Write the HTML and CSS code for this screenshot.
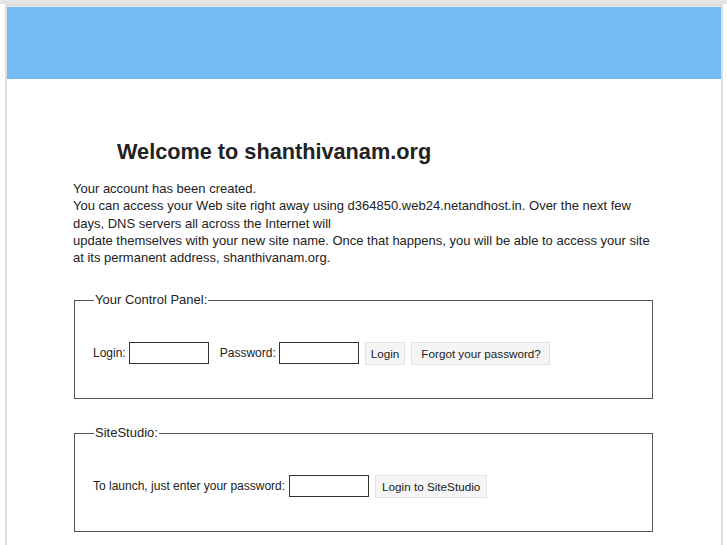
FILE: index.html
```html
<!DOCTYPE html>
<html>
<head>
<meta charset="utf-8">
<title>Welcome to shanthivanam.org</title>
<link rel="stylesheet" href="styles.css">
</head>
<body>
<div class="frame">
  <div class="banner"></div>
  <div class="content">
    <h1 class="title">Welcome to shanthivanam.org</h1>
    <p class="intro">Your account has been created.<br>
    You can access your Web site right away using d364850.web24.netandhost.in. Over the next few days, DNS servers all across the Internet will<br>
    update themselves with your new site name. Once that happens, you will be able to access your site at its permanent address, shanthivanam.org.</p>

    <fieldset class="box">
      <legend class="box-legend">Your Control Panel:</legend>
      <div class="row">
        <label class="lbl">Login:</label>
        <input class="field" type="text">
        <label class="lbl lbl-gap">Password:</label>
        <input class="field field-pw" type="password">
        <button class="btn btn-narrow">Login</button>
        <button class="btn btn-wide">Forgot your password?</button>
      </div>
    </fieldset>

    <fieldset class="box box-second">
      <legend class="box-legend">SiteStudio:</legend>
      <div class="row">
        <label class="lbl lbl-long">To launch, just enter your password:</label>
        <input class="field field-pw" type="password">
        <button class="btn">Login to SiteStudio</button>
      </div>
    </fieldset>
  </div>
</div>
</body>
</html>
```

FILE: styles.css
```css
html, body {
  margin: 0;
  padding: 0;
  background: #ffffff;
}
body {
  font-family: "Liberation Sans", Arial, sans-serif;
  font-size: 13px;
  color: #222222;
  border-top: 4px solid #e4e4e4;
}
.frame {
  margin: 0 4px 0 5px;
  border: 2px solid #dddddd;
  border-bottom: none;
  min-height: 560px;
}
.banner {
  height: 72px;
  background: #74bbf5;
  border-top: 1px solid #eaeaea;
}
.content {
  padding: 0 68px 0 66px;
}
.title {
  margin: 60px 0 0 44px;
  font-size: 21.7px;
  font-weight: bold;
  color: #222222;
  line-height: 26px;
}
.intro {
  margin: 15px 0 0 0;
  line-height: 17.25px;
}
.box {
  margin: 26px 0 0 1px;
  padding: 33px 18px 33px 18px;
  border: 1px solid #555555;
}
.box-second {
  margin-top: 26px;
}
.box-legend {
  padding: 0 1px;
  margin-left: 1px;
  line-height: 16px;
  font-size: 13px;
}
.row {
  display: flex;
  align-items: center;
  height: 24px;
  font-size: 12px;
}
.lbl {
  margin-right: 3px;
}
.lbl-gap {
  margin-left: 11px;
}
.lbl-long {
  margin-right: 4px;
}
.field {
  width: 76px;
  height: 18px;
  border: 1px solid #333333;
  padding: 1px;
  margin: 0;
  font: inherit;
}
.field-pw {
  margin-right: 6px;
}
.btn {
  font-family: inherit;
  font-size: 11.7px;
  color: #222222;
  background: #f5f5f5;
  border: 1px solid #e2e2e2;
  height: 23px;
  padding: 0 6px;
  margin-right: 6px;
  border-radius: 0;
}
.btn-narrow {
  padding: 0 5px;
}
.btn-wide {
  padding: 0 8px 0 9px;
}
```
